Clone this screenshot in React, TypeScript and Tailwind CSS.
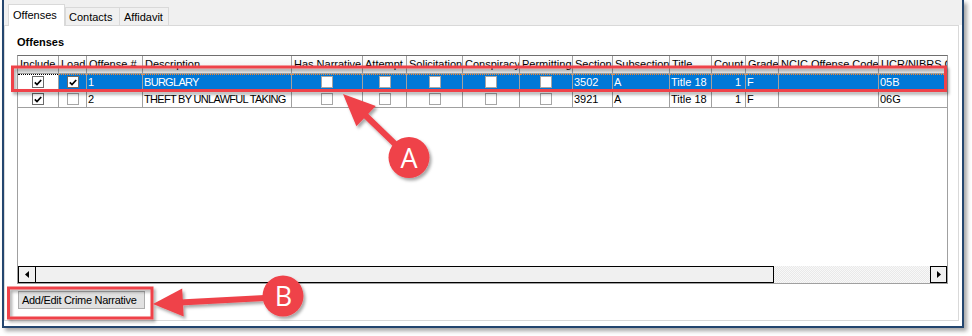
import React from 'react';

type Col = { title: string; w: number; kind: 'check' | 'text' | 'num' | 'caps' };

const COLS: Col[] = [
  { title: 'Include', w: 41, kind: 'check' },
  { title: 'Load', w: 28, kind: 'check' },
  { title: 'Offense #', w: 56, kind: 'text' },
  { title: 'Description', w: 149, kind: 'caps' },
  { title: 'Has Narrative', w: 71, kind: 'check' },
  { title: 'Attempt', w: 44, kind: 'check' },
  { title: 'Solicitation', w: 56, kind: 'check' },
  { title: 'Conspiracy', w: 57, kind: 'check' },
  { title: 'Permitting', w: 53, kind: 'check' },
  { title: 'Section', w: 40, kind: 'text' },
  { title: 'Subsection', w: 57, kind: 'text' },
  { title: 'Title', w: 42, kind: 'text' },
  { title: 'Count', w: 34, kind: 'num' },
  { title: 'Grade', w: 33, kind: 'text' },
  { title: 'NCIC Offense Code', w: 100, kind: 'text' },
  { title: 'UCR/NIBRS Code', w: 100, kind: 'text' },
];

const ROWS: (string | boolean)[][] = [
  [true, true, '1', 'BURGLARY', false, false, false, false, false, '3502', 'A', 'Title 18', '1', 'F', '', '05B'],
  [true, false, '2', 'THEFT BY UNLAWFUL TAKING', false, false, false, false, false, '3921', 'A', 'Title 18', '1', 'F', '', '06G'],
];

const RED = '#ef4249';

export default function App() {
  return (
    <div className="relative h-[336px] w-[972px] overflow-hidden bg-white font-['Liberation_Sans',Arial,sans-serif] text-black">
      <div className="ml-[2px] flex h-[328px] w-[962px] flex-col border-x-2 border-b-2 border-[#24466f] bg-white shadow-[3px_3px_4px_rgba(0,0,0,0.35)]">
        {/* tab strip */}
        <div className="flex h-[25px] items-end bg-[#f0f0f0] pl-[4px] text-[11px]">
          <div className="relative z-10 -mb-px h-[22px] w-[57px] border-x border-t border-[#d9d9d9] bg-white pl-[4px] leading-[20px]">
            Offenses
          </div>
          <div className="h-[18px] w-[55px] border-x border-t border-[#d9d9d9] bg-[#f0f0f0] pl-[3px] pt-px leading-[17px]">
            Contacts
          </div>
          <div className="h-[18px] w-[49px] border-r border-t border-[#d9d9d9] bg-[#f0f0f0] pl-[4px] pt-px leading-[17px]">
            Affidavit
          </div>
        </div>

        {/* tab panel */}
        <div className="mr-[3px] flex h-[296px] flex-col border border-[#d9d9d9] bg-white pl-[12px] pt-[10px]">
          <p className="mb-[6px] h-[13px] text-[11px] font-bold leading-[13px]">Offenses</p>

          <div className="flex h-[229px] w-[931px] flex-col overflow-hidden border border-[#a0a0a0] border-t-[#6e6e6e] bg-white text-[11px]">
            <div className="flex h-[18px] shrink-0">
              {COLS.map((c) => (
                <div
                  key={c.title}
                  style={{ width: c.w }}
                  className="h-[18px] shrink-0 overflow-hidden whitespace-nowrap border-b border-r border-[#a0a0a0] bg-gradient-to-b from-white to-[#ececec] pl-[2px] leading-[17px]"
                >
                  {c.title}
                </div>
              ))}
            </div>

            {ROWS.map((r, ri) => (
              <GridRow key={ri} row={r} selected={ri === 0} />
            ))}

            <div className="flex-1" />

            {/* horizontal scrollbar */}
            <div className="flex h-[17px] shrink-0">
              <div className="grid w-[18px] place-items-center border border-black bg-[#f0f0f0]">
                <svg width="4" height="7" viewBox="0 0 4 7">
                  <path d="M4 0V7L0 3.5Z" fill="#000" />
                </svg>
              </div>
              <div className="w-[738px] border-y border-r border-black bg-[#f0f0f0]" />
              <div className="flex-1 bg-[image:repeating-conic-gradient(#e9e9e9_0_25%,#f8f8f8_0_50%)] bg-[length:2px_2px]" />
              <div className="grid w-[17px] place-items-center border border-black bg-[#f0f0f0]">
                <svg width="4" height="7" viewBox="0 0 4 7">
                  <path d="M0 0V7L4 3.5Z" fill="#000" />
                </svg>
              </div>
            </div>
          </div>

          <button className="ml-px mt-[7px] h-[18px] w-[127px] border border-[#adadad] bg-[#e1e1e1] pl-[3px] text-left text-[11px] leading-[16px] tracking-[-0.3px]">
            Add/Edit Crime Narrative
          </button>
        </div>
      </div>

      <Annotations />
    </div>
  );
}

function GridRow({ row, selected }: { row: (string | boolean)[]; selected: boolean }) {
  return (
    <div className="flex h-[17px] shrink-0">
      {COLS.map((c, i) => {
        const v = row[i];
        const current = selected && i === 0;
        const blue = selected && !current;
        return (
          <div
            key={c.title}
            style={{ width: c.w }}
            className={`relative flex h-[17px] shrink-0 items-center overflow-hidden whitespace-nowrap border-b border-r border-[#a0a0a0] leading-[16px] ${
              blue ? 'bg-[#0078d7] text-white' : 'bg-white'
            } ${c.kind === 'check' ? 'justify-center' : c.kind === 'num' ? 'justify-end pr-[4px]' : 'pl-px'} ${
              c.kind === 'caps' ? 'tracking-[-0.7px]' : ''
            }`}
          >
            {/* dotted focus rectangle along the current row */}
            {selected && (
              <span
                className={`absolute left-0 right-0 top-0 border-t border-dotted ${
                  current ? 'border-black' : 'border-[#ff8728]'
                }`}
              />
            )}
            {typeof v === 'boolean' ? <CheckBox checked={v} /> : v}
          </div>
        );
      })}
    </div>
  );
}

function CheckBox({ checked }: { checked: boolean }) {
  return (
    <span
      className={`grid h-[12px] w-[12px] place-items-center border bg-white ${
        checked ? 'border-[#6b6b6b]' : 'border-[#a6a6a6]'
      }`}
    >
      {checked && (
        <svg width="8" height="7" viewBox="0 0 8 7">
          <path d="M0.8 3.4L3 5.6L7.2 1" stroke="#000" strokeWidth="1.7" fill="none" />
        </svg>
      )}
    </span>
  );
}

function Annotations() {
  return (
    <svg className="pointer-events-none absolute left-0 top-0" width="972" height="336" viewBox="0 0 972 336">
      <defs>
        <filter id="sh" x="-20%" y="-20%" width="140%" height="160%">
          <feDropShadow dx="2" dy="2.5" stdDeviation="1.6" floodColor="#000" floodOpacity="0.35" />
        </filter>
      </defs>

      <g filter="url(#sh)">
        <rect x="12.5" y="67" width="933" height="23.5" fill="none" stroke={RED} strokeWidth="3" />
        <rect x="8.5" y="288" width="143.5" height="30" fill="none" stroke={RED} strokeWidth="3" />
      </g>

      {/* arrow A */}
      <g filter="url(#sh)">
        <line x1="364" y1="114" x2="409" y2="157.5" stroke={RED} strokeWidth="6" />
        <polygon points="343,94 375.8,106.1 356.4,126.3" fill={RED} />
        <circle cx="409" cy="157.5" r="20.5" fill={RED} />
      </g>
      <text x="409" y="167.5" textAnchor="middle" fontSize="27" fill="#fff" fontFamily="'Open Sans', 'Liberation Sans', sans-serif">
        A
      </text>

      {/* arrow B */}
      <g filter="url(#sh)">
        <line x1="180" y1="302.5" x2="283" y2="297" stroke={RED} strokeWidth="6" />
        <polygon points="153,304 182.2,288.4 183.7,316.4" fill={RED} />
        <circle cx="283" cy="296" r="20.5" fill={RED} />
      </g>
      <text x="283.5" y="305.5" textAnchor="middle" fontSize="27" fill="#fff" fontFamily="'Open Sans', 'Liberation Sans', sans-serif">
        B
      </text>
    </svg>
  );
}
